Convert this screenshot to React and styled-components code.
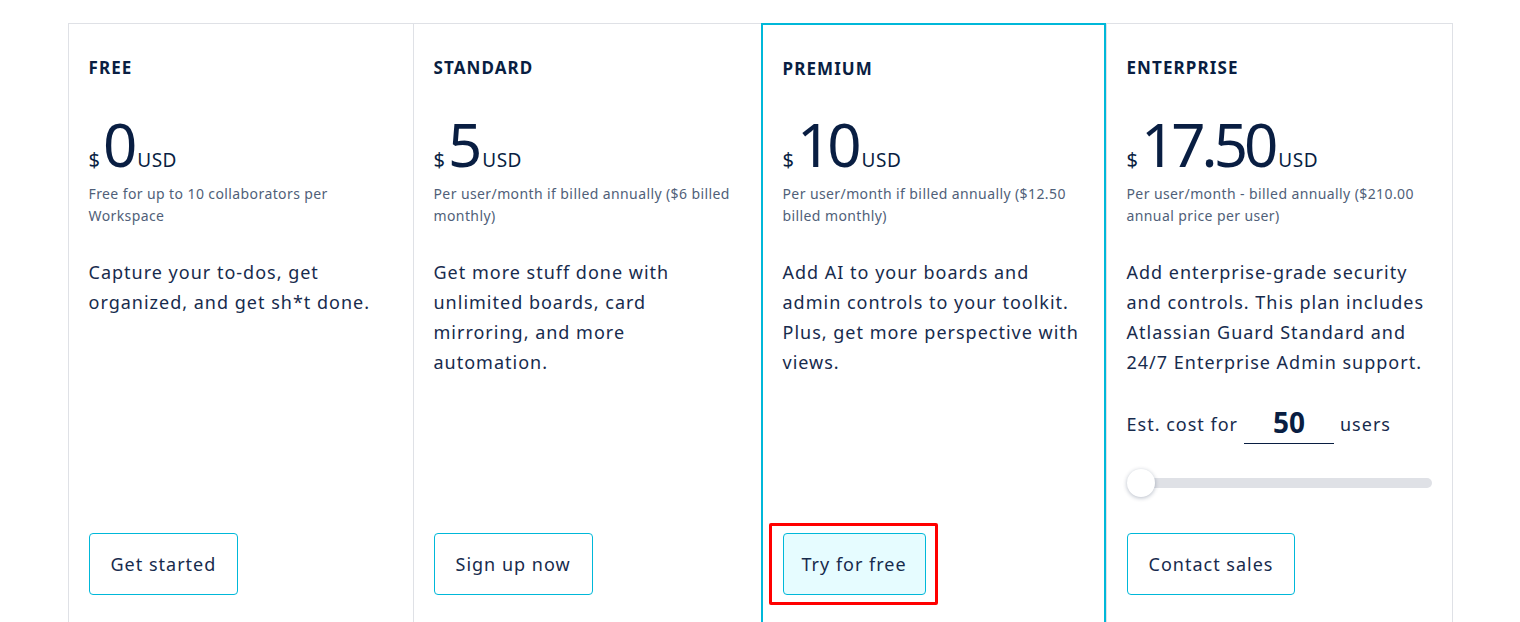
import React, { useState } from 'react';
import styled, { createGlobalStyle } from 'styled-components';

const GlobalStyle = createGlobalStyle`
  body {
    margin: 0;
    background: #ffffff;
    font-family: 'Noto Sans', 'Liberation Sans', sans-serif;
    color: #172b4d;
  }
`;

const Page = styled.div`
  padding-top: 23px;
  display: flex;
  justify-content: center;
  height: 622px;
  overflow: hidden;
  box-sizing: border-box;
`;

const Grid = styled.div`
  display: grid;
  grid-template-columns: 344px 348px 345px 346px;
  align-items: stretch;
  border: 1px solid #dfe1e6;
  border-bottom: none;
  align-self: flex-start;
`;

const Column = styled.div`
  display: flex;
  flex-direction: column;
  padding: 33px 20px 60px;
  border-left: ${(p) => (p.$first ? 'none' : '1px solid #dfe1e6')};
  ${(p) =>
    p.$featured &&
    `
    border: 2px solid #00b8d9;
    margin-top: -1px;
    padding-top: 32px;
    padding-bottom: 58px;
  `}
`;

const Title = styled.h3`
  margin: ${(p) => (p.$featured ? '1px 0 -1px' : '0')};
  font-size: 17px;
  line-height: 22px;
  font-weight: 700;
  color: #091e42;
  letter-spacing: 1.1px;
`;

const PriceRow = styled.div`
  display: flex;
  align-items: baseline;
  margin-top: 34px;
  color: #091e42;
`;

const Currency = styled.span`
  font-size: 20px;
  margin-right: 3px;
`;

const Amount = styled.span`
  font-size: 60px;
  line-height: 62px;
  letter-spacing: -4px;
`;

const Unit = styled.span`
  font-size: 19px;
  margin-left: 4px;
  letter-spacing: 0.5px;
`;

const Billing = styled.p`
  margin: 8px 0 0;
  font-size: 14px;
  line-height: 22px;
  color: #505f79;
  letter-spacing: 0.4px;
`;

const Description = styled.p`
  margin: 30px 0 0;
  font-size: 18px;
  line-height: 30px;
  color: #172b4d;
  letter-spacing: 1px;
`;

const Estimate = styled.div`
  display: flex;
  align-items: flex-end;
  gap: 6px;
  margin-top: 28px;
  font-size: 18px;
  line-height: 30px;
  letter-spacing: 1px;
`;

const CountInput = styled.input`
  width: 90px;
  height: 39px;
  box-sizing: border-box;
  border: none;
  border-bottom: 1px solid #091e42;
  font-family: inherit;
  font-size: 28px;
  line-height: 34px;
  font-weight: 700;
  color: #091e42;
  text-align: center;
  padding: 0 0 4px;
  margin: 0 0 -5px;
  outline: none;
  background: transparent;
`;

const Range = styled.input`
  -webkit-appearance: none;
  appearance: none;
  display: block;
  width: 100%;
  height: 10px;
  margin: 39px 0 0;
  border-radius: 5px;
  background: #dfe1e6;
  outline: none;

  &::-webkit-slider-thumb {
    -webkit-appearance: none;
    width: 28px;
    height: 28px;
    border-radius: 50%;
    background: #ffffff;
    box-shadow: 0 1px 4px rgba(9, 30, 66, 0.3);
    cursor: pointer;
  }
`;

const Actions = styled.div`
  margin-top: auto;
  padding-top: 45px;
`;

const Marker = styled.div`
  display: inline-block;
  padding: 7px 9px 7px 11px;
  margin: -10px -12px -10px -14px;
  border: ${(p) => (p.$on ? '3px solid #ff0000' : '3px solid transparent')};
  border-radius: 2px;
`;

const Button = styled.button`
  display: block;
  font-family: inherit;
  font-size: 18px;
  letter-spacing: 1px;
  color: #172b4d;
  height: 62px;
  padding: 0 ${(p) => (p.$primary ? '18px' : '21px')};
  border: 1px solid #00b8d9;
  border-radius: 4px;
  background: ${(p) => (p.$primary ? '#e6fcff' : '#ffffff')};
  cursor: pointer;
`;

const plans = [
  {
    name: 'FREE',
    amount: '0',
    billing: 'Free for up to 10 collaborators per Workspace',
    text: 'Capture your to-dos, get organized, and get sh*t done.',
    cta: 'Get started',
  },
  {
    name: 'STANDARD',
    amount: '5',
    billing: 'Per user/month if billed annually ($6 billed monthly)',
    text: 'Get more stuff done with unlimited boards, card mirroring, and more automation.',
    cta: 'Sign up now',
  },
  {
    name: 'PREMIUM',
    amount: '10',
    billing: 'Per user/month if billed annually ($12.50 billed monthly)',
    text: 'Add AI to your boards and admin controls to your toolkit. Plus, get more perspective with views.',
    cta: 'Try for free',
    featured: true,
  },
  {
    name: 'ENTERPRISE',
    amount: '17.50',
    billing: 'Per user/month - billed annually ($210.00 annual price per user)',
    text: 'Add enterprise-grade security and controls. This plan includes Atlassian Guard Standard and 24/7 Enterprise Admin support.',
    cta: 'Contact sales',
    estimate: true,
  },
];

export default function App() {
  const [users, setUsers] = useState(50);

  return (
    <>
      <GlobalStyle />
      <Page>
        <Grid>
          {plans.map((plan, index) => (
            <Column
              key={plan.name}
              $first={index === 0}
              $featured={plan.featured}
            >
              <Title $featured={plan.featured}>{plan.name}</Title>
              <PriceRow>
                <Currency>$</Currency>
                <Amount>{plan.amount}</Amount>
                <Unit>USD</Unit>
              </PriceRow>
              <Billing>{plan.billing}</Billing>
              <Description>{plan.text}</Description>
              {plan.estimate && (
                <>
                  <Estimate>
                    <span>Est. cost for</span>
                    <CountInput
                      value={users}
                      onChange={(e) => setUsers(e.target.value)}
                    />
                    <span>users</span>
                  </Estimate>
                  <Range
                    type="range"
                    min="50"
                    max="5000"
                    value={users}
                    onChange={(e) => setUsers(e.target.value)}
                  />
                </>
              )}
              <Actions>
                <Marker $on={plan.featured}>
                  <Button $primary={plan.featured}>{plan.cta}</Button>
                </Marker>
              </Actions>
            </Column>
          ))}
        </Grid>
      </Page>
    </>
  );
}
